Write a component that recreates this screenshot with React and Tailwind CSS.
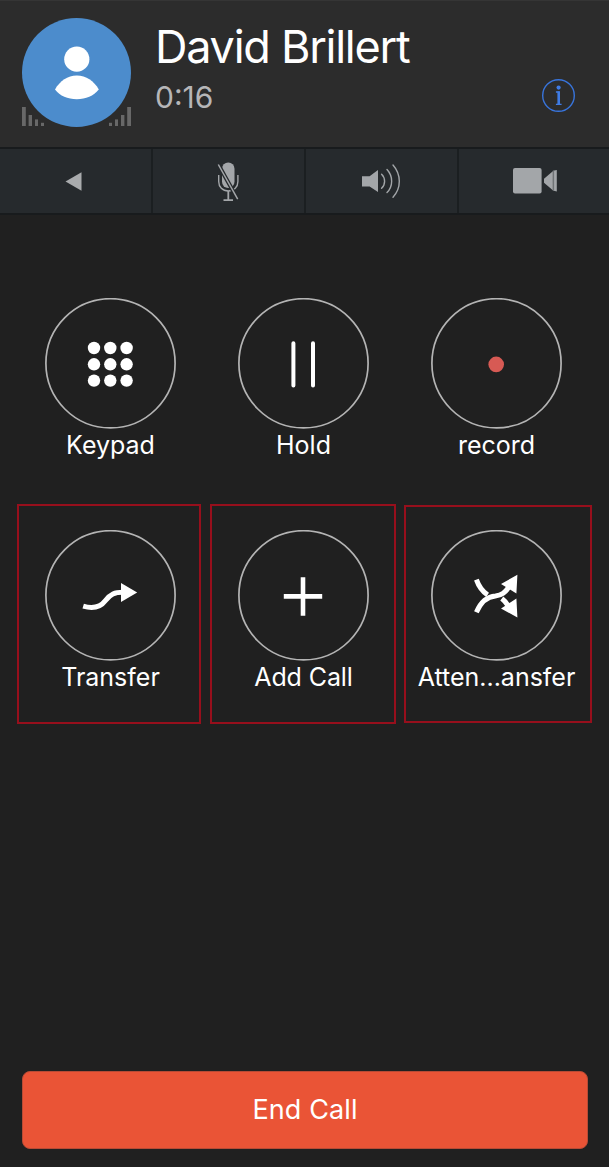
import React from 'react';

const KeypadIcon = () => (
  <>
    {[49, 65.3, 81.6].map((y) =>
      [49, 65.3, 81.6].map((x) => (
        <circle key={`${x}-${y}`} cx={x} cy={y + 1} r="6.2" fill="#fff" />
      ))
    )}
  </>
);

const HoldIcon = () => (
  <path d="M55.4 45.2V87.4M75 45.2V87.4" stroke="#fff" strokeWidth="4" strokeLinecap="round" />
);

const RecordIcon = () => <circle cx="65.2" cy="66.4" r="7.8" fill="#d75a54" />;

const TransferIcon = () => (
  <>
    <path d="M38.2 76.2C45 78.2 54.5 78.5 60.5 70.5C65.5 64 69.5 62.3 78 62.3" stroke="#fff" strokeWidth="5" />
    <path d="M76 53L92.2 62.4L76 72Z" fill="#fff" />
  </>
);

const AddIcon = () => <path d="M45.8 66.4H84.2M65 47.2V85.8" stroke="#fff" strokeWidth="4.6" />;

const AttendedIcon = () => (
  <>
    <path d="M45.4 49.6C47.6 55.8 51 61.2 56.6 64.8M70.8 68.6C73.4 70.6 75.4 73 77.4 76" stroke="#fff" strokeWidth="5" />
    <path d="M45.4 82.2C49.6 72.6 55 66.6 64.4 66C70.8 65.4 74 62.4 78.4 56.6" stroke="#fff" strokeWidth="5" />
    <path d="M86.4 44.8L70 54L85.4 63.4ZM85.4 68.6L70 78.4L86.4 87.6Z" fill="#fff" />
  </>
);

const MutedMicIcon = () => (
  <svg width="24" height="42" viewBox="0 0 24 42" fill="none">
    <rect x="6" y="2.5" width="12.5" height="25.5" rx="6.2" fill="#a3a6a9" />
    <path d="M2.7 15V21.5C2.7 27 6.5 31 12.3 31C18.1 31 21.9 27 21.9 21.5V15" stroke="#a3a6a9" strokeWidth="1.4" />
    <path d="M12.3 31V40.2M7.5 40.2H17" stroke="#a3a6a9" strokeWidth="1.8" />
    <path d="M2.3 4.5L21.7 39.2" stroke="#262a2d" strokeWidth="4" />
    <path d="M2.3 4.5L21.7 39.2" stroke="#a3a6a9" strokeWidth="1.5" />
  </svg>
);

const SpeakerIcon = () => (
  <svg width="42" height="36" viewBox="0 0 42 36" fill="none" stroke="#a3a6a9" strokeWidth="1.4" strokeLinecap="round">
    <path d="M1 13.2H8.6L17 7V29L8.6 23.4H1Z" fill="#a3a6a9" stroke="none" />
    <path d="M20.6 11.2C24.6 15 24.6 21.4 20.6 25.3M26 6.6C32.2 13.2 32.2 23.4 26 29.6M32 2C40.4 11.6 40.4 25 32 34.2" />
  </svg>
);

const CameraIcon = () => (
  <svg width="44" height="26" viewBox="0 0 44 26" fill="#a3a6a9">
    <rect width="28.6" height="25.4" rx="2" />
    <path d="M31 10.8L39.8 3.2V22.2L31 14.8Z" />
    <path d="M39.8 2.8L43.8 2V23.4L39.8 22.6Z" />
    <path d="M40.6 2.8V22.6" stroke="#5b5f62" strokeWidth="0.8" />
  </svg>
);

const SignalBars = ({ className }) => (
  <svg className={className} width="22" height="19" viewBox="0 0 22 19" fill="#686868">
    <rect x="0" y="0" width="3.8" height="19" />
    <rect x="6.6" y="8" width="3.4" height="11" />
    <rect x="13" y="12.4" width="3" height="6.6" />
    <rect x="19" y="15.8" width="3" height="3.2" />
  </svg>
);

const CallAction = ({ label, children, labelClass }) => (
  <button className="flex w-full flex-col items-center">
    <svg width="131" height="131" viewBox="0 0 131 131" fill="none">
      <circle cx="65.5" cy="65.3" r="64.6" stroke="#b4b4b4" strokeWidth="1.7" />
      {children}
    </svg>
    <span className={`h-8 text-[25px] leading-8 whitespace-nowrap text-white ${labelClass || ''}`}>{label}</span>
  </button>
);

const App = () => {
  return (
    <div className="flex h-[1167px] w-[609px] flex-col overflow-hidden bg-[#202020] font-['Inter',sans-serif]">
      <header className="flex h-[147px] shrink-0 border-t border-[#353535] bg-[#2c2c2c] pl-[22px]">
        <div className="relative mt-[17px] h-[109px] w-[109px]">
          <svg width="109" height="109" viewBox="0 0 109 109">
            <circle cx="54.5" cy="54.5" r="54.5" fill="#4c8ccc" />
            <circle cx="54.8" cy="41.2" r="12.6" fill="#fff" />
            <path d="M33 71.5C38 63 45.5 57.6 54.8 57.6C64.2 57.6 71.8 63 76.8 71.5C71.5 78 64 81.2 54.8 81.2C45.5 81.2 38 78 33 71.5Z" fill="#fff" />
          </svg>
          <SignalBars className="absolute bottom-px left-0" />
          <SignalBars className="absolute right-0 bottom-px -scale-x-100" />
        </div>
        <div className="mt-[19px] ml-6 flex flex-1 flex-col">
          <h1 className="text-[45px] leading-[54px] font-normal tracking-[-1.25px] whitespace-nowrap text-white">David Brillert</h1>
          <span className="mt-[5px] text-[30px] leading-9 text-[#b6b6b8]">0:16</span>
        </div>
        <button className="relative mt-[78px] mr-[34px] h-[33px] w-[33px]">
          <svg width="33" height="33" viewBox="0 0 33 33" fill="none">
            <circle cx="16.5" cy="16.5" r="15.8" stroke="#3874db" strokeWidth="1.4" />
            <circle cx="16.6" cy="8.6" r="2.1" fill="#3f7ce6" />
            <path d="M13.9 13H17.2V25M13.9 25.4H19.6" stroke="#3f7ce6" strokeWidth="1.3" />
            <path d="M16.7 12.5V25.6" stroke="#3f7ce6" strokeWidth="2.6" />
          </svg>
        </button>
      </header>

      <nav className="flex h-[68px] shrink-0 border-y-2 border-[#181b1d] bg-[#262a2d]">
        <button className="flex w-[153px] items-center justify-center border-r-2 border-[#1b1f21] pr-[5px]">
          <svg width="17" height="19" viewBox="0 0 17 19" fill="#a9abad">
            <path d="M0.5 9.5L16.5 0.3V18.7Z" />
          </svg>
        </button>
        <button className="flex w-[153px] items-center justify-center border-r-2 border-[#1b1f21] pr-px">
          <MutedMicIcon />
        </button>
        <button className="flex w-[153px] items-center justify-center border-r-2 border-[#1b1f21] pl-px">
          <SpeakerIcon />
        </button>
        <button className="flex w-[150px] items-center justify-center pl-[2px]">
          <CameraIcon />
        </button>
      </nav>

      <main className="flex-1 pl-[14px]">
        <div className="mt-[83px] grid grid-cols-[193px_193px_193px]">
          <CallAction label="Keypad">
            <KeypadIcon />
          </CallAction>
          <CallAction label="Hold">
            <HoldIcon />
          </CallAction>
          <CallAction label="record">
            <RecordIcon />
          </CallAction>
        </div>
        <div className="mt-[43px] grid grid-cols-[193px_193px_193px]">
          <div className="ml-[3px] h-[220px] w-[184px] border-2 border-[#970f1c] pt-6 pl-[3px]">
            <CallAction label="Transfer">
              <TransferIcon />
            </CallAction>
          </div>
          <div className="ml-[3px] h-[220px] w-[186px] border-2 border-[#970f1c] pt-6 pl-px">
            <CallAction label="Add Call" labelClass="tracking-[-0.1px]">
              <AddIcon />
            </CallAction>
          </div>
          <div className="mt-px ml-1 h-[218px] w-[188px] border-2 border-[#970f1c] pt-[23px] pr-[3px]">
            <CallAction label="Atten...ansfer">
              <AttendedIcon />
            </CallAction>
          </div>
        </div>
      </main>

      <footer className="px-[22px] pb-[18px]">
        <button className="h-[78px] w-[566px] rounded-lg border border-[#b84b35] bg-[#ea5436] pt-px text-[27px] tracking-[0.1px] text-white">
          End Call
        </button>
      </footer>
    </div>
  );
};

export default App;
